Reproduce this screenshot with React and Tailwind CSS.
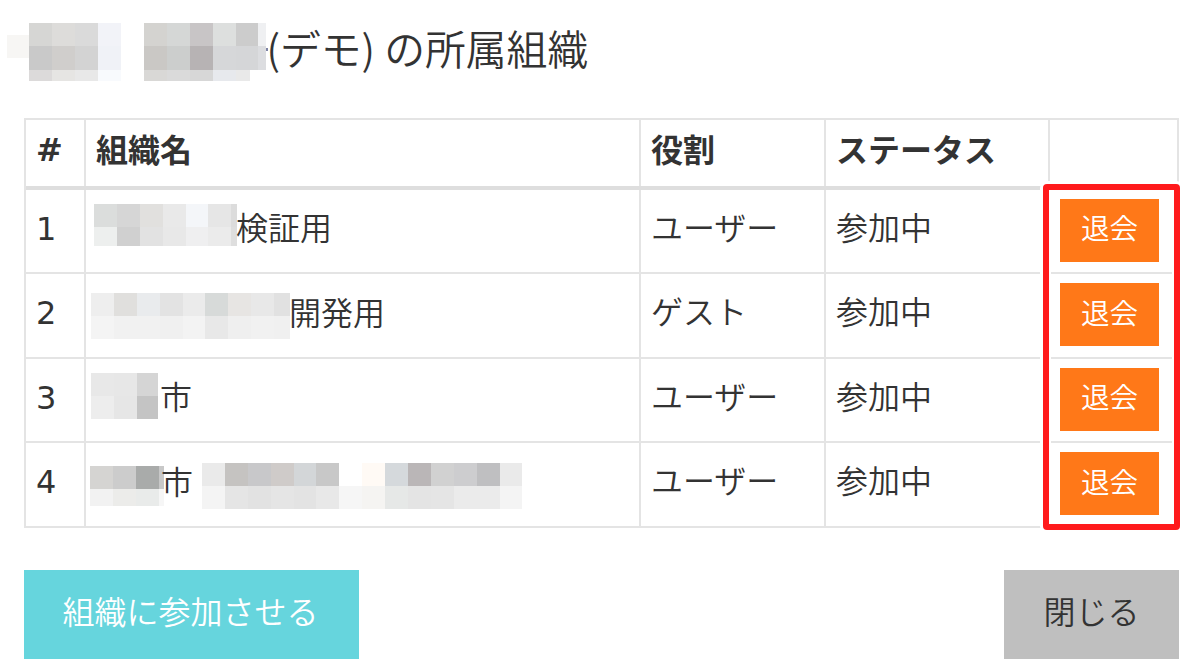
const organizations = [
  {
    id: 1,
    name: '検証用',
    role: 'ユーザー',
    status: '参加中',
    pad: 'pl-[8px]',
    maskClass: 'w-[143px] mr-[-1px] mt-[-11px]',
    mask: [
      ['bg-[#dbdddc]', 'bg-[#d6d6d6]', 'bg-[#e1e0de]', 'bg-[#e9e9e9]', 'bg-[#f4f6f9]', 'bg-[#e6e6e6]', 'bg-[#dcdcdc]'],
      ['bg-[#edefee]', 'bg-[#d0d0d0]', 'bg-[#e2e2e2]', 'bg-[#e8e8e8]', 'bg-[#efeff0]', 'bg-[#ebebeb]', 'bg-[#dedede]'],
    ],
    maskHeights: ['h-[23px]', 'h-[19px]'],
  },
  {
    id: 2,
    name: '開発用',
    role: 'ゲスト',
    status: '参加中',
    pad: 'pl-[5px]',
    maskClass: 'w-[199px] mr-[-1px] mt-[1px]',
    mask: [
      ['bg-[#eeeeee]', 'bg-[#e0dfdd]', 'bg-[#e9ebed]', 'bg-[#e3e3e3]', 'bg-[#ebebeb]', 'bg-[#d7dad9]', 'bg-[#e7e5e3]', 'bg-[#e8e8e8]', 'bg-[#e1e1e1]'],
      ['bg-[#f4f4f4]', 'bg-[#f1f1f1]', 'bg-[#f1f1f1]', 'bg-[#f0f0f0]', 'bg-[#f3f3f3]', 'bg-[#e8e8e8]', 'bg-[#efefef]', 'bg-[#f1f1f1]', 'bg-[#f0f0f0]'],
    ],
    maskHeights: ['h-[23px]', 'h-[23px]'],
  },
  {
    id: 3,
    name: '市',
    role: 'ユーザー',
    status: '参加中',
    pad: 'pl-[5px]',
    maskClass: 'w-[67px] mr-[2px] mt-[-8px]',
    mask: [
      ['bg-[#e8e8e8]', 'bg-[#e7e7e7]', 'bg-[#d5d5d5]'],
      ['bg-[#ededed]', 'bg-[#e6e6e6]', 'bg-[#c4c4c4]'],
    ],
    maskHeights: ['h-[23px]', 'h-[23px]'],
  },
  {
    id: 4,
    name: '市',
    role: 'ユーザー',
    status: '参加中',
    pad: 'pl-[4px]',
    maskClass: 'w-[74px] mr-[-3px] mt-[4px]',
    mask: [
      ['bg-[#d5d4d2]', 'bg-[#cccccc]', 'bg-[#a9abaa]', 'bg-[#c8c8c8]'],
      ['bg-[#f2f2f2]', 'bg-[#ececea]', 'bg-[#e9ebea]', 'bg-[#f6f6f6]'],
    ],
    maskHeights: ['h-[23px]', 'h-[17px]'],
    tail: [
      ['bg-[#eaeaea]', 'bg-[#c5c3c1]', 'bg-[#c8c8ca]', 'bg-[#cfcbc9]', 'bg-[#d3d6d8]', 'bg-[#c8c8c8]', 'bg-white', 'bg-[#fffaf5]', 'bg-[#d5d9dc]', 'bg-[#bab6b7]', 'bg-[#d1d1d1]', 'bg-[#cdcdcf]', 'bg-[#bfbfc1]', 'bg-[#eaeaea]'],
      ['bg-[#f4f4f4]', 'bg-[#e5e5e5]', 'bg-[#e2e2e2]', 'bg-[#e5e5e5]', 'bg-[#e3e3e3]', 'bg-[#e8e8e8]', 'bg-[#f6f6f6]', 'bg-[#f5f4f2]', 'bg-[#e6e8e7]', 'bg-[#e4e4e4]', 'bg-[#e5e5e5]', 'bg-[#ebebeb]', 'bg-[#ebebeb]', 'bg-[#f4f4f4]'],
    ],
  },
];

const familyMask = [
  ['bg-[#d6d6d4]', 'bg-[#dddcda]', 'bg-[#dadada]', 'bg-[#f2f3f8]'],
  ['bg-[#c9c9c9]', 'bg-[#d0cecc]', 'bg-[#d3d3d3]', 'bg-[#f0f2f7]'],
  ['bg-[#dcdada]', 'bg-[#e6e5e3]', 'bg-[#e8e8e8]', 'bg-[#f8fafd]'],
];

const givenMask = [
  ['bg-[#d4d3d0]', 'bg-[#d5d7d6]', 'bg-[#c8c5c6]', 'bg-[#dddfde]', 'bg-[#cccccc]', 'bg-[#eff0f2]'],
  ['bg-[#cac8c5]', 'bg-[#cccecd]', 'bg-[#b7b3b4]', 'bg-[#d6d7d9]', 'bg-[#d5d6d8]', 'bg-[#dcdde0]'],
];

const givenMaskLow = [['bg-[#d9d8d6]', 'bg-[#dadada]', 'bg-[#d7d7d7]', 'bg-[#e7e9ed]', 'bg-[#e9e9e9]']];

// Pixelated block that hides a private name
function Mosaic({ rows, heights, className }) {
  return (
    <div className={`shrink-0 overflow-hidden ${className}`}>
      {rows.map((row, i) => (
        <div key={i} className={`flex ${heights[i]}`}>
          {row.map((color, j) => (
            <div key={j} className={`w-[22.9px] shrink-0 ${color}`} />
          ))}
        </div>
      ))}
    </div>
  );
}

function Row({ org }) {
  return (
    <div className="grid h-[84.5px] grid-cols-[60px_555px_185px_224px_129px] border-b-2 border-[#e4e4e4]">
      <div className="border-r-2 border-[#e4e4e4] pl-[10px] pt-[15px] font-['DejaVu_Sans'] font-normal leading-[48px]">{org.id}</div>
      <div className={`flex items-center border-r-2 border-[#e4e4e4] ${org.pad}`}>
        <Mosaic rows={org.mask} heights={org.maskHeights} className={org.maskClass} />
        <span className="mt-[-9px]">{org.name}</span>
        {org.tail && <Mosaic rows={org.tail} heights={['h-[23px]', 'h-[23px]']} className="ml-[9px] mt-[4px] w-[321px]" />}
      </div>
      <div className="border-r-2 border-[#e4e4e4] pl-[10px] pt-[12px] leading-[48px]">{org.role}</div>
      <div className="border-r-2 border-[#e4e4e4] pl-[10px] pt-[12px] leading-[48px]">{org.status}</div>
      <div className="pl-[10px] pt-[9px]">
        <button className="block h-[63px] w-[99px] bg-[#ff7818] pb-[5px] text-[28.5px] text-white">退会</button>
      </div>
    </div>
  );
}

export default function App() {
  return (
    <div className="h-[671px] w-[1200px] overflow-hidden bg-white px-6 font-['Noto_Sans_CJK_JP',sans-serif] text-[32px] font-[350] text-[#333]">
      <h1 className="-ml-[17px] flex h-[118px] items-start pt-[23px] text-[40.8px] leading-[56px]">
        <div className="mt-3 h-[23px] w-[22px] bg-[#f7f6f4]" />
        <Mosaic rows={familyMask} heights={['h-[23px]', 'h-[24px]', 'h-[11px]']} className="w-[92px]" />
        <div className="ml-[23px] w-[122px] shrink-0">
          <Mosaic rows={givenMask} heights={['h-[23px]', 'h-[24px]']} className="w-[122px]" />
          <Mosaic rows={givenMaskLow} heights={['h-[11px]']} className="w-[106px]" />
        </div>
        <div className="mt-[25px] h-[3px] w-[2px] bg-[#7d83a5]" />
        <span className="-ml-[1.5px] -mt-[3px] whitespace-nowrap">(デモ) の所属組織</span>
      </h1>

      <div className="relative h-[410px] w-[1155px] border-2 border-b-0 border-[#e4e4e4]">
        <div className="grid h-[69.5px] grid-cols-[60px_555px_185px_224px_129px] border-b-4 border-[#dedede] font-bold leading-[48px]">
          <div className="border-r-2 border-[#e4e4e4] pl-[10px] pt-[6px] font-['DejaVu_Sans']">#</div>
          <div className="border-r-2 border-[#e4e4e4] pl-[10px] pt-[4px]">組織名</div>
          <div className="border-r-2 border-[#e4e4e4] pl-[10px] pt-[4px]">役割</div>
          <div className="border-r-2 border-[#e4e4e4] pl-[10px] pt-[4px]">ステータス</div>
          <div />
        </div>
        {organizations.map((org) => (
          <Row key={org.id} org={org} />
        ))}
        <div className="absolute left-[1017px] top-[64px] h-[346px] w-[137px] rounded-[4px] border-[6px] border-[#ff1a1c] shadow-[0_0_0_3px_white,inset_0_0_0_2px_white]" />
      </div>

      <div className="mt-[42px] flex w-[1155px] justify-between">
        <button className="h-[89px] w-[335px] bg-[#66d5dd] pb-[10px] pr-[2px] text-white">組織に参加させる</button>
        <button className="h-[89px] w-[175px] bg-[#bfbfbf] pb-[10px]">閉じる</button>
      </div>
    </div>
  );
}
